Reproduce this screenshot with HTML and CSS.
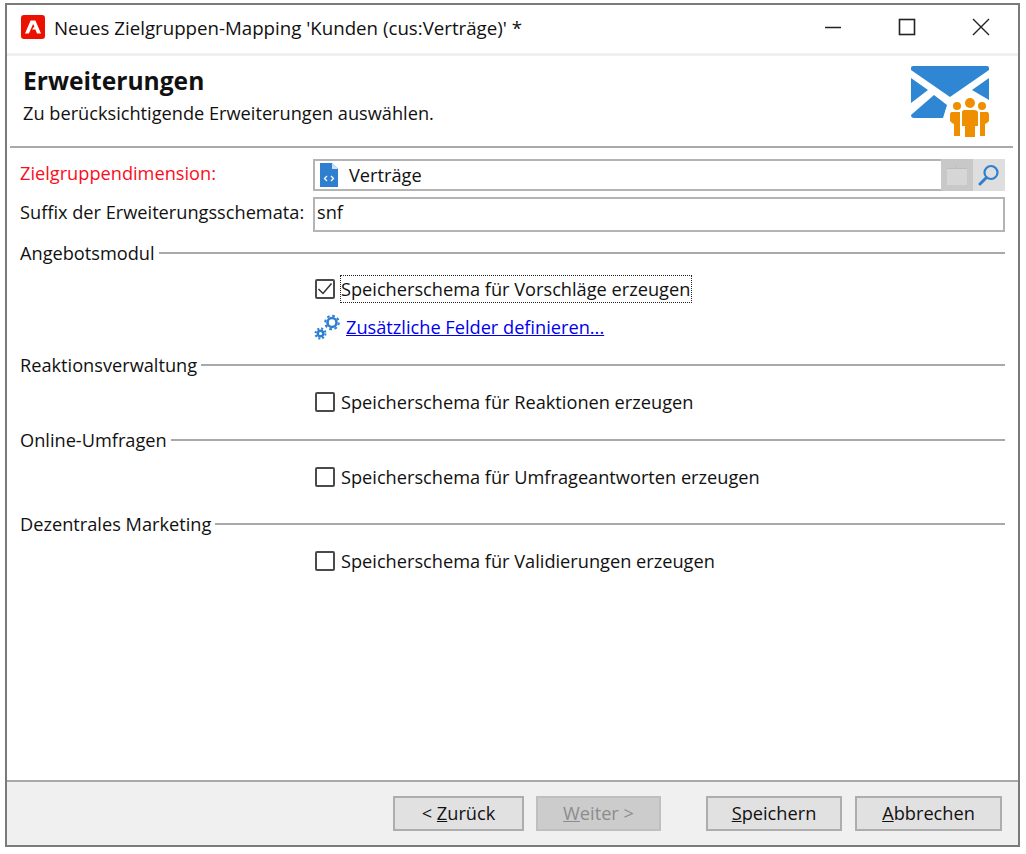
FILE: index.html
```html
<!DOCTYPE html>
<html lang="de">
<head>
  <meta charset="UTF-8">
  <title>Neues Zielgruppen-Mapping</title>
  <link rel="stylesheet" href="styles.css">
</head>
<body>
  <div class="window">
    <div class="titlebar">
      <svg class="app-icon" width="24" height="24" viewBox="0 0 24 24">
        <rect width="24" height="24" rx="3" fill="#eb1000"/>
        <path d="M9.600 5.500h4.800L20 18.500h-4l-1.600-4H11l2.400-2.900-1.300-2.600L7.900 18.500H4z" fill="#fff"/>
      </svg>
      <span class="title">Neues Zielgruppen-Mapping 'Kunden (cus:Verträge)' *</span>
      <div class="win-buttons">
        <svg width="18" height="18" viewBox="0 0 18 18"><path d="M1 9.500h16" stroke="#222" stroke-width="1.500"/></svg>
        <svg width="18" height="18" viewBox="0 0 18 18"><rect x="1.500" y="1.500" width="15" height="15" fill="none" stroke="#222" stroke-width="1.600"/></svg>
        <svg width="18" height="18" viewBox="0 0 18 18"><path d="M1 1l16 16M17 1L1 17" stroke="#222" stroke-width="1.400"/></svg>
      </div>
    </div>

    <div class="header">
      <div class="header-text">
        <h1>Erweiterungen</h1>
        <p>Zu berücksichtigende Erweiterungen auswählen.</p>
      </div>
      <svg class="header-icon" width="80" height="72" viewBox="0 0 80 72">
        <path d="M2 0h74q2 0 2 2v2L39 31 0 4V2q0-2 2-2z" fill="#2f86d2"/>
        <path d="M0 12l17 12L0 37zM78 12v22L61 24z" fill="#2f86d2"/>
        <path d="M0 49L23 29l13 10-4 13H3q-3 0-3-3z" fill="#2f86d2"/>
        <g fill="#ef8f00">
          <circle cx="46" cy="40" r="4"/><circle cx="59" cy="37" r="5"/><circle cx="71" cy="40" r="4"/>
          <path d="M41 46h8v24h-6V58l-2-1-2-2v-6q0-3 2-3z"/>
          <path d="M69 46h7q2 0 2 3v6l-2 2-2 1v12h-5z"/>
          <path d="M53 44h10q4 0 4 3v13h-3v11H54V60h-3V47q0-3 2-3z"/>
        </g>
      </svg>
    </div>

    <div class="content">
      <div class="field-row">
        <label class="field-label required">Zielgruppendimension:</label>
        <div class="picker">
          <div class="picker-value">
            <svg width="20" height="26" viewBox="0 0 20 26">
              <path d="M1 1h12l6 6v18H1z" fill="#2f7fd0"/>
              <path d="M13 1v6h6z" fill="#cfe2f5"/>
              <path d="M8 14l-2.500 2.500L8 19M12 14l2.500 2.500L12 19" fill="none" stroke="#fff" stroke-width="1.300"/>
            </svg>
            <span>Verträge</span>
          </div>
          <div class="picker-folder">
            <svg width="20" height="20" viewBox="0 0 20 20"><path d="M0 3h20v17H0z" fill="#d6d6d6"/><path d="M0 3.500h20" stroke="#bdbdbd"/><path d="M9 0v3" stroke="#bdbdbd"/></svg>
          </div>
          <div class="picker-search">
            <svg width="22" height="22" viewBox="0 0 22 22"><circle cx="13" cy="8.500" r="6.500" fill="none" stroke="#2f7fd0" stroke-width="2.200"/><path d="M8 14l-6 6" stroke="#2f7fd0" stroke-width="3" stroke-linecap="round"/></svg>
          </div>
        </div>
      </div>
      <div class="field-row suffix-row">
        <label class="field-label">Suffix der Erweiterungsschemata:</label>
        <div class="text-box">snf</div>
      </div>

      <div class="section first">
        <div class="legend"><span>Angebotsmodul</span><i></i></div>
        <div class="option">
          <span class="check">
            <svg width="18" height="18" viewBox="0 0 18 18"><path d="M2.500 9l4.500 4.500L15.500 3.500" fill="none" stroke="#333" stroke-width="1.500"/></svg>
          </span>
          <span class="focused">Speicherschema für Vorschläge erzeugen</span>
        </div>
        <div class="link-row">
          <svg width="28" height="28" viewBox="0 0 28 28">
            <g fill="none" stroke="#2f7fd0">
              <circle cx="18" cy="9.500" r="4.500" stroke-width="2.600"/>
              <circle cx="18" cy="9.500" r="6.800" stroke-width="2" stroke-dasharray="2.700 2.640"/>
              <circle cx="6.500" cy="20.500" r="2.800" stroke-width="2.400"/>
              <circle cx="6.500" cy="20.500" r="5" stroke-width="2" stroke-dasharray="2 1.930"/>
            </g>
          </svg>
          <a href="#">Zusätzliche Felder definieren...</a>
        </div>
      </div>

      <div class="section react">
        <div class="legend"><span>Reaktionsverwaltung</span><i></i></div>
        <div class="option"><span class="check"></span><span>Speicherschema für Reaktionen erzeugen</span></div>
      </div>
      <div class="section survey">
        <div class="legend"><span>Online-Umfragen</span><i></i></div>
        <div class="option"><span class="check"></span><span>Speicherschema für Umfrageantworten erzeugen</span></div>
      </div>
      <div class="section marketing">
        <div class="legend"><span>Dezentrales Marketing</span><i></i></div>
        <div class="option"><span class="check"></span><span>Speicherschema für Validierungen erzeugen</span></div>
      </div>
    </div>

    <div class="footer">
      <button class="btn back">&lt; <u>Z</u>urück</button>
      <button class="btn next" disabled><u>W</u>eiter &gt;</button>
      <button class="btn save"><u>S</u>peichern</button>
      <button class="btn cancel"><u>A</u>bbrechen</button>
    </div>
  </div>
</body>
</html>
```

FILE: styles.css
```css
html, body {
  margin: 0;
  background: #fff;
}
body {
  padding: 3px 0 0 5px;
  font-family: "Open Sans", "Noto Sans", sans-serif;
  font-size: 18.2px;
  color: #111;
}

.window {
  width: 1011px;
  height: 840px;
  border: 2px solid #7b7b7b;
  display: flex;
  flex-direction: column;
  background: #fff;
}

.titlebar {
  height: 44px;
  padding-bottom: 4px;
  flex: none;
  display: flex;
  align-items: center;
  padding-left: 14px;
  border-bottom: 3px solid #f0f0f0;
}
.title {
  margin-left: 9px;
  font-size: 18.7px;
}
.win-buttons {
  margin-left: auto;
  display: flex;
  gap: 56px;
  padding-right: 28px;
}

.header {
  height: 90px;
  flex: none;
  display: flex;
  justify-content: space-between;
  margin: 0 5px 0 3px;
  padding-left: 13px;
  padding-right: 22px;
  border-bottom: 2px solid #a9a9a9;
}
.header h1 {
  margin: 10px 0 0;
  font-size: 24.6px;
  font-weight: 700;
  line-height: 30px;
}
.header p {
  margin: 5px 0 0;
  line-height: 24px;
}
.header-icon {
  margin-top: 10px;
}

.content {
  flex: 1;
  padding: 11px 13px 0 13px;
}

.field-row {
  display: flex;
  align-items: center;
}
.suffix-row {
  margin-top: 6px;
}
.field-label {
  width: 293px;
  flex: none;
  margin-bottom: 5px;
}
.required {
  color: #fb0d1c;
}

.picker {
  flex: 1;
  height: 32px;
  display: flex;
  background: #dedede;
}
.picker-value {
  flex: 1;
  display: flex;
  align-items: center;
  gap: 10px;
  padding: 0 0 1px 4px;
  background: #fff;
  border: 2px solid #b4b4b4;
  border-right: none;
  box-sizing: border-box;
}
.picker-folder {
  width: 32px;
  display: flex;
  align-items: center;
  justify-content: center;
  background: #c8c8c8;
}
.picker-search {
  width: 32px;
  display: flex;
  align-items: center;
  justify-content: center;
}
.text-box {
  flex: 1;
  height: 35px;
  box-sizing: border-box;
  border: 2px solid #b4b4b4;
  padding-left: 2px;
  line-height: 26px;
}

.section.first { margin-top: 9px; }
.section.react { margin-top: 12px; }
.section.survey { margin-top: 14px; }
.section.marketing { margin-top: 23px; }

.legend {
  height: 24px;
  display: flex;
  align-items: center;
  gap: 4px;
}
.legend i {
  flex: 1;
  height: 2px;
  background: #a9a9a9;
}
.option {
  height: 24px;
  margin-top: 13px;
  display: flex;
  align-items: center;
  gap: 6px;
  padding-left: 295px;
}
.first .option {
  margin-top: 12px;
}
.check {
  width: 20px;
  height: 20px;
  flex: none;
  box-sizing: border-box;
  border: 2px solid #4a4a4a;
  border-radius: 2px;
  display: flex;
  align-items: center;
  justify-content: center;
}
.check svg {
  flex: none;
}
.focused {
  outline: 1px dotted #222;
  line-height: 26px;
  padding-right: 1px;
}
.link-row {
  margin-top: 12px;
  display: flex;
  align-items: center;
  gap: 4px;
  padding-left: 294px;
  height: 28px;
}
.link-row a {
  color: #0000ee;
}

.footer {
  height: 63px;
  flex: none;
  display: flex;
  align-items: center;
  background: #f0f0f0;
  border-top: 2px solid #a9a9a9;
  padding-left: 386px;
}
.btn {
  height: 35px;
  font: inherit;
  color: #111;
  background: #e1e1e1;
  border: 2px solid #adadad;
  padding: 0 0 2px;
}
.back { width: 131px; }
.next {
  width: 125px;
  margin-left: 12px;
  background: #ccc;
  border-color: #bfbfbf;
  color: #8c8c8c;
}
.save {
  width: 136px;
  margin-left: 45px;
}
.cancel {
  width: 147px;
  margin-left: 13px;
}
```
